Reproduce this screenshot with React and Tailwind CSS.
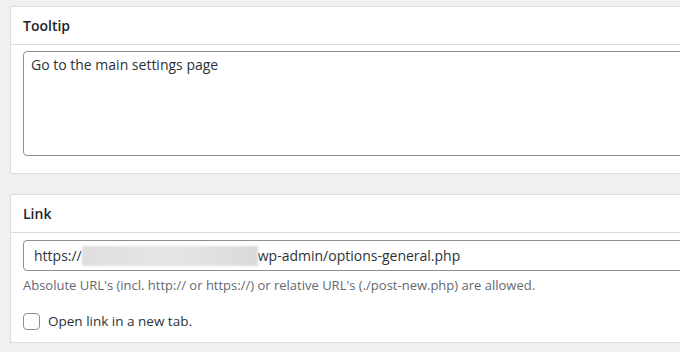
import React from 'react';

const font = { fontFamily: '"Open Sans", "Noto Sans", sans-serif' };

const Card = ({ title, children, className = '' }) => (
  <div className={`ml-[10px] w-[720px] border border-[#dcdcde] bg-white ${className}`}>
    <div className="h-[38px] border-b border-[#dcdcde] px-3 flex items-center">
      <h2 className="text-[14px] font-semibold text-[#1d2327] leading-none">{title}</h2>
    </div>
    {children}
  </div>
);

export default function App() {
  return (
    <div className="w-[680px] h-[352px] overflow-hidden bg-[#f0f0f1] pt-[6px]" style={font}>
      <Card title="Tooltip">
        <div className="pl-3 pt-[6px] pb-[17px]">
          <textarea
            defaultValue="Go to the main settings page"
            className="block w-[700px] h-[105px] resize-none rounded-[4px] border border-[#8c8f94] px-[7px] py-[3px] text-[14px] leading-[20px] text-[#2c3338] outline-none"
          />
        </div>
      </Card>

      <Card title="Link" className="mt-[20px]">
        <div className="pl-3 pt-[7px] pb-[11px]">
          <div className="flex h-[31px] w-[700px] items-center rounded-[4px] border border-[#8c8f94] px-[10px] text-[14px] text-[#2c3338]">
            <span>https://</span>
            <span className="inline-block h-[20px] w-[176px] bg-gradient-to-r from-[#dedede] via-[#e6e6e6] to-[#dadada] blur-[1px]" />
            <span>wp-admin/options-general.php</span>
          </div>
          <p className="mt-[6px] text-[13px] leading-[16px] text-[#646970]">
            Absolute URL's (incl. http:// or https://) or relative URL's (./post-new.php) are allowed.
          </p>
          <label className="mt-[18px] flex items-center gap-[8px] text-[13.5px] text-[#2c3338]">
            <span className="inline-block h-[17px] w-[17px] rounded-[4px] border border-[#8c8f94] bg-white" />
            <span>Open link in a new tab.</span>
          </label>
        </div>
      </Card>
    </div>
  );
}
